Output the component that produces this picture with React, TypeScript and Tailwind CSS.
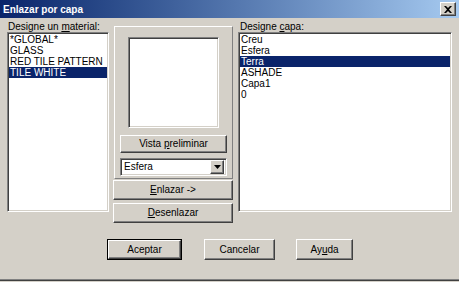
const materials = ["*GLOBAL*", "GLASS", "RED TILE PATTERN", "TILE WHITE"];
const layers = ["Creu", "Esfera", "Terra", "ASHADE", "Capa1", "0"];

const raised =
  "border border-t-white border-l-white border-r-[#404040] border-b-[#404040] shadow-[inset_-1px_-1px_0_#808080]";
const sunken =
  "border border-t-[#808080] border-l-[#808080] border-r-white border-b-white shadow-[inset_1px_1px_0_#404040,inset_-1px_-1px_0_#d4d0c8]";

function ListBox({ items, selected }: { items: string[]; selected: number }) {
  return (
    <div className={`h-[180px] w-full bg-white ${sunken} pt-[1px] px-[1px]`}>
      {items.map((item, i) => (
        <div
          key={item}
          className={`h-[11px] px-[1px] leading-[11px] whitespace-nowrap ${
            i === selected ? "bg-[#0a246a] text-white" : "text-black"
          }`}
        >
          {item}
        </div>
      ))}
    </div>
  );
}

function Button({ children, className = "" }: { children: React.ReactNode; className?: string }) {
  return (
    <div className={`flex items-center justify-center bg-[#d4d0c8] ${raised} ${className}`}>
      <span className="leading-none">{children}</span>
    </div>
  );
}

export default function App() {
  return (
    <div className="h-[282px] w-[459px] overflow-hidden bg-[#d4d0c8] font-['Liberation_Sans',Arial,sans-serif] text-[10px] text-black">
      <div className="flex h-[281px] flex-col border-b border-b-[#404040] shadow-[inset_0_-1px_0_#808080]">
        {/* title bar */}
        <div className="flex h-[18px] items-center justify-between bg-gradient-to-r from-[#0a246a] to-[#a6caf0] pl-[3px] pr-[3px]">
          <span className="text-[10px] font-bold text-white">Enlazar por capa</span>
          <div className={`flex h-[14px] w-[16px] items-center justify-center bg-[#d4d0c8] ${raised}`}>
            <svg width="8" height="7" viewBox="0 0 8 7">
              <path d="M0 0h2l2 2 2-2h2L5 3.5 8 7H6L4 5 2 7H0l3-3.5z" fill="#000" />
            </svg>
          </div>
        </div>

        <div className="flex pl-[7px]">
          {/* materials */}
          <div className="flex w-[102px] flex-col">
            <div className="h-[14px] pl-[1px] pt-[3px] leading-[11px]">
              Designe un <span className="underline">m</span>aterial:
            </div>
            <ListBox items={materials} selected={3} />
          </div>

          {/* preview + link buttons */}
          <div className="ml-[4px] flex w-[120px] flex-col">
            <div className="ml-[1px] mt-[8px] flex h-[153px] flex-col border border-t-white border-l-white border-r-[#808080] border-b-[#808080] px-[5px]">
              <div className={`mx-auto mt-[10px] h-[91px] w-[91px] bg-white ${sunken}`} />
              <Button className="mt-[7px] h-[18px] w-full">
                Vista <span className="underline">p</span>reliminar
              </Button>
              <div className={`mt-[5px] flex h-[18px] w-full items-center bg-white ${sunken} p-[2px]`}>
                <span className="flex-1 pl-[1px] leading-none">Esfera</span>
                <div className={`flex h-[14px] w-[14px] items-center justify-center bg-[#d4d0c8] ${raised}`}>
                  <svg width="7" height="4" viewBox="0 0 7 4">
                    <path d="M0 0h7L3.5 4z" fill="#000" />
                  </svg>
                </div>
              </div>
            </div>
            <Button className="mt-[1px] h-[20px] w-full">
              <span className="underline">E</span>nlazar -&gt;
            </Button>
            <Button className="mt-[3px] h-[20px] w-full">
              <span className="underline">D</span>esenlazar
            </Button>
          </div>

          {/* layers */}
          <div className="ml-[5px] flex w-[214px] flex-col">
            <div className="h-[14px] pl-[2px] pt-[3px] leading-[11px]">
              Designe <span className="underline">c</span>apa:
            </div>
            <ListBox items={layers} selected={2} />
          </div>
        </div>

        {/* dialog buttons */}
        <div className="mt-[16px] flex pl-[107px]">
          <div className="h-[21px] w-[75px] border border-black">
            <Button className="h-full w-full">Aceptar</Button>
          </div>
          <Button className="ml-[22px] h-[21px] w-[71px]">Cancelar</Button>
          <Button className="ml-[21px] h-[21px] w-[57px]">
            Ay<span className="underline">u</span>da
          </Button>
        </div>
      </div>
    </div>
  );
}
